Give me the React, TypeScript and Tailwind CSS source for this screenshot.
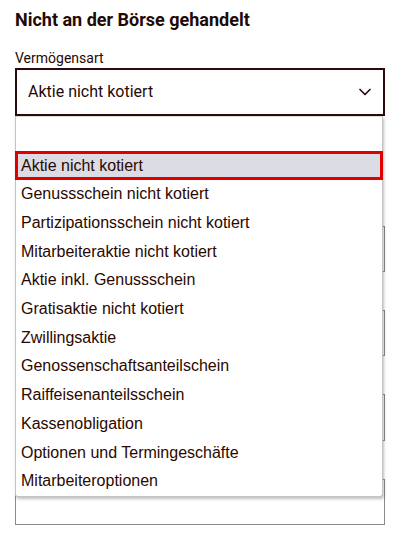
import { ChevronDown } from "lucide-react";

const options = [
  "Aktie nicht kotiert",
  "Genussschein nicht kotiert",
  "Partizipationsschein nicht kotiert",
  "Mitarbeiteraktie nicht kotiert",
  "Aktie inkl. Genussschein",
  "Gratisaktie nicht kotiert",
  "Zwillingsaktie",
  "Genossenschaftsanteilschein",
  "Raiffeisenanteilsschein",
  "Kassenobligation",
  "Optionen und Termingeschäfte",
  "Mitarbeiteroptionen",
];

export default function App() {
  return (
    <div className="w-[399px] h-[539px] bg-white overflow-hidden font-['Roboto',sans-serif] text-[#1f0a05]">
      <div className="px-[15px] pt-[8px]">
        <h2 className="text-[18px] font-bold leading-[24px]">Nicht an der Börse gehandelt</h2>
        <label className="block mt-[17px] text-[14px] leading-[18px]">Vermögensart</label>
        <div className="relative mt-[1px]">
          <div className="w-[370px] h-[48px] border-2 border-[#2a0a0a] flex items-center justify-between pl-[11px] pr-[8px]">
            <span className="text-[16px]">Aktie nicht kotiert</span>
            <ChevronDown size={20} strokeWidth={2} className="text-[#2a0a0a]" />
          </div>

          {/* fields behind the open list */}
          <div className="flex flex-col gap-[38px] pt-[110px]">
            <div className="w-[370px] h-[46px] border border-[#8a8a8a]" />
            <div className="w-[370px] h-[46px] border border-[#8a8a8a]" />
            <div className="w-[370px] h-[47px] border border-[#8a8a8a]" />
            <div className="w-[370px] h-[46px] border border-[#8a8a8a]" />
          </div>

          {/* open option list */}
          <div className="absolute left-0 top-[48px] w-[368px] h-[381px] bg-white border border-[#c4c4c4] border-t-[#dcdcdc] rounded-b-[3px] shadow-[1px_2px_3px_rgba(0,0,0,0.25)] font-['Liberation_Sans',Arial,sans-serif] text-[16px] text-[#2a0800]">
            <div className="h-[34px]" />
            {options.map((o, i) => (
              <div
                key={o}
                className={
                  i === 0
                    ? "h-[29px] -mx-px flex items-center pl-[3px] bg-[#dcdce4] border-[3px] border-[#e00000]"
                    : "h-[28.7px] flex items-center pl-[5px]"
                }
              >
                {o}
              </div>
            ))}
          </div>
        </div>
      </div>
    </div>
  );
}
